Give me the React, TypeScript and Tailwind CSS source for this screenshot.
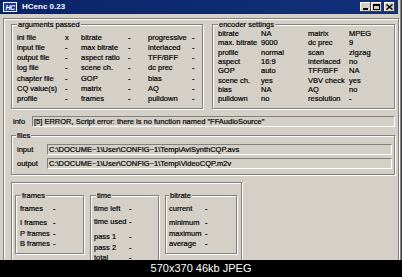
import React from "react";

const etched = "border border-[#808080] shadow-[inset_1px_1px_0_#ffffff,1px_1px_0_#ffffff]";
const sunken = "border-t border-l border-[#808080] border-b-white border-r-white border-b border-r";

const args: string[][] = [
  ["ini file", "x", "bitrate", "-", "progressive", "-"],
  ["input file", "-", "max bitrate", "-", "interlaced", "-"],
  ["output file", "-", "aspect ratio", "-", "TFF/BFF", "-"],
  ["log file", "-", "scene ch.", "-", "dc prec", "-"],
  ["chapter file", "-", "GOP", "-", "bias", "-"],
  ["CQ value(s)", "-", "matrix", "-", "AQ", "-"],
  ["profile", "-", "frames", "-", "pulldown", "-"],
];

const enc: string[][] = [
  ["bitrate", "NA", "matrix", "MPEG"],
  ["max. bitrate", "9000", "dc prec", "9"],
  ["profile", "normal", "scan", "zigzag"],
  ["aspect", "16:9", "interlaced", "no"],
  ["GOP", "auto", "TFF/BFF", "NA"],
  ["scene ch.", "yes", "VBV check", "yes"],
  ["bias", "NA", "AQ", "no"],
  ["pulldown", "no", "resolution", "-"],
];

function Legend({ text, cls }: { text: string; cls: string }) {
  return <legend className={`px-[1px] leading-[9px] bg-[#d4d0c8] ${cls}`}>{text}</legend>;
}

function Row({ label, value, w, cls }: { label: string; value: string; w: string; cls: string }) {
  return (
    <div className={`flex items-center whitespace-nowrap ${cls}`}>
      <span className={w}>{label}</span>
      <span>{value}</span>
    </div>
  );
}

export default function App() {
  return (
    <div className="w-[402px] h-[277px] bg-black flex flex-col overflow-hidden font-['Liberation_Sans',Arial,sans-serif] text-black">
      {/* window */}
      <div className="h-[260px] shrink-0 bg-[#d4d0c8] overflow-hidden flex flex-col pr-[4px] shadow-[inset_-1px_0_0_#404040,inset_-2px_0_0_#808080] text-[7.5px] [-webkit-text-stroke:0.2px_#000]">
        {/* title bar */}
        <div className="h-[14px] shrink-0 bg-gradient-to-r from-[#0a246a] to-[#12307a] flex items-center pl-[3px] pr-[3px] [-webkit-text-stroke:0]">
          <span className="w-[14px] h-[10px] bg-[#1838a8] border border-white flex items-center justify-center text-white italic font-bold text-[7px] leading-none tracking-[-0.5px]">
            HC
          </span>
          <span className="ml-[5px] text-white font-bold text-[8px] leading-none">HCenc 0.23</span>
          <div className="ml-auto flex items-center">
            <span className="w-[11px] h-[10px] bg-[#d4d0c8] shadow-[inset_-1px_-1px_0_#404040,inset_1px_1px_0_#ffffff] flex items-end justify-center pb-[2px]">
              <span className="w-[5px] h-[2px] bg-black" />
            </span>
            <span className="w-[11px] h-[10px] bg-[#d4d0c8] shadow-[inset_-1px_-1px_0_#404040,inset_1px_1px_0_#ffffff] flex items-center justify-center">
              <span className="w-[7px] h-[6px] border border-black border-t-2" />
            </span>
            <span className="ml-[2px] w-[11px] h-[10px] bg-[#d4d0c8] shadow-[inset_-1px_-1px_0_#404040,inset_1px_1px_0_#ffffff] flex items-center justify-center">
              <svg width="7" height="6" viewBox="0 0 7 6">
                <path d="M0.5 0.5 L6.5 5.5 M6.5 0.5 L0.5 5.5" stroke="black" strokeWidth="1.4" />
              </svg>
            </span>
          </div>
        </div>

        {/* client frame */}
        <div className={`mt-[4px] ml-[3px] w-[396px] grow flex flex-col pt-[1px] pr-[3px] ${etched}`}>
          {/* top groups */}
          <div className="flex pl-[7px]">
            <fieldset className={`w-[192px] ${etched}`}>
              <Legend text="arguments passed" cls="ml-[5px]" />
              <div className="grid grid-cols-[48px_16px_47px_20px_44px_1fr] auto-rows-[10.3px] items-center pl-[5px] pt-[3px] pb-[4px] whitespace-nowrap">
                {args.map((r, i) => r.map((c, j) => <span key={`${i}-${j}`}>{c}</span>))}
              </div>
            </fieldset>
            <fieldset className={`ml-[9px] w-[183px] ${etched}`}>
              <Legend text="encoder settings" cls="ml-[5px]" />
              <div className="grid grid-cols-[43px_47px_41px_1fr] auto-rows-[9.3px] items-center pl-[5px] pb-[4px] whitespace-nowrap">
                {enc.map((r, i) => r.map((c, j) => <span key={`${i}-${j}`}>{c}</span>))}
              </div>
            </fieldset>
          </div>

          {/* info */}
          <div className="mt-[7px] flex items-center pl-[9px]">
            <span className="w-[19px] shrink-0">info</span>
            <div className={`flex-1 h-[11px] flex items-center pl-[1px] whitespace-nowrap overflow-hidden ${sunken}`}>
              [5] ERROR, Script error: there is no function named "FFAudioSource"
            </div>
          </div>

          {/* files */}
          <fieldset className={`mt-[4px] ml-[7px] ${etched}`}>
            <Legend text="files" cls="ml-[4px]" />
            <div className="flex flex-col gap-[2px] pl-[5px] pr-[2px] pt-[4px] pb-[5px]">
              <div className="flex items-center">
                <span className="w-[30px] shrink-0">input</span>
                <div className={`flex-1 h-[11px] flex items-center pl-[1px] whitespace-nowrap ${sunken}`}>
                  C:\DOCUME~1\User\CONFIG~1\Temp\AviSynthCQP.avs
                </div>
              </div>
              <div className="flex items-center">
                <span className="w-[30px] shrink-0">output</span>
                <div className={`flex-1 h-[11px] flex items-center pl-[1px] whitespace-nowrap ${sunken}`}>
                  C:\DOCUME~1\User\CONFIG~1\Temp\VideoCQP.m2v
                </div>
              </div>
            </div>
          </fieldset>

          {/* bottom panel */}
          <div className={`mt-[7px] ml-[7px] w-[231px] h-[120px] shrink-0 flex items-start pl-[3px] pt-[8px] ${etched}`}>
            <fieldset className={`w-[69px] ${etched}`}>
              <Legend text="frames" cls="ml-[5px]" />
              <div className="flex flex-col pl-[4px] pt-[4px] pb-[4px]">
                <Row label="frames" value="-" w="w-[33px]" cls="h-[10px]" />
                <Row label="I frames" value="-" w="w-[33px]" cls="mt-[4px] h-[10.5px]" />
                <Row label="P frames" value="-" w="w-[33px]" cls="h-[10.5px]" />
                <Row label="B frames" value="-" w="w-[33px]" cls="h-[10.5px]" />
              </div>
            </fieldset>
            <fieldset className={`ml-[6px] w-[69px] ${etched}`}>
              <Legend text="time" cls="ml-[5px]" />
              <div className="flex flex-col pl-[3px] pt-[4px] pb-[6px]">
                <Row label="time left" value="-" w="w-[35px]" cls="h-[10px]" />
                <Row label="time used" value="-" w="w-[35px]" cls="mt-[3px] h-[10px]" />
                <Row label="pass 1" value="-" w="w-[35px]" cls="mt-[5px] h-[10.5px]" />
                <Row label="pass 2" value="-" w="w-[35px]" cls="h-[10.5px]" />
                <Row label="total" value="-" w="w-[35px]" cls="h-[10.5px]" />
              </div>
            </fieldset>
            <fieldset className={`ml-[6px] w-[72px] ${etched}`}>
              <Legend text="bitrate" cls="ml-[3px]" />
              <div className="flex flex-col pl-[3px] pt-[4px] pb-[4px]">
                <Row label="current" value="-" w="w-[36px]" cls="h-[10px]" />
                <Row label="minimum" value="-" w="w-[36px]" cls="mt-[4px] h-[10.5px]" />
                <Row label="maximum" value="-" w="w-[36px]" cls="h-[10.5px]" />
                <Row label="average" value="-" w="w-[36px]" cls="h-[10.5px]" />
              </div>
            </fieldset>
          </div>
        </div>
      </div>

      {/* caption */}
      <div className="h-[17px] shrink-0 flex items-center justify-center text-white text-[11px] leading-[17px]">
        570x370 46kb JPEG
      </div>
    </div>
  );
}
